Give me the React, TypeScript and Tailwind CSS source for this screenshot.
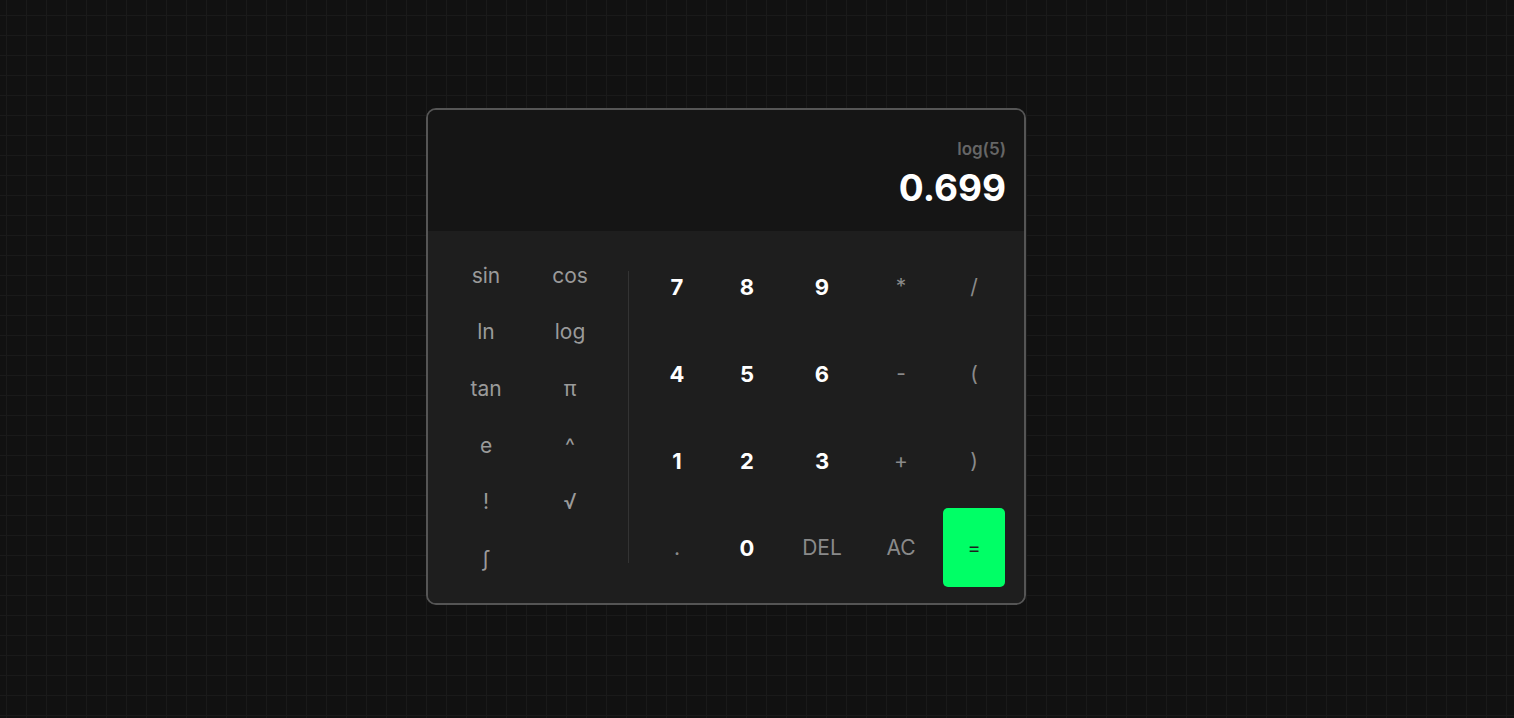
import React from "react";

const sciKeys = ["sin", "cos", "ln", "log", "tan", "π", "e", "^", "!", "√", "∫", ""];

type Key = { label: string; kind: "num" | "op" | "eq" };

const mainKeys: Key[] = [
  { label: "7", kind: "num" },
  { label: "8", kind: "num" },
  { label: "9", kind: "num" },
  { label: "*", kind: "op" },
  { label: "/", kind: "op" },
  { label: "4", kind: "num" },
  { label: "5", kind: "num" },
  { label: "6", kind: "num" },
  { label: "-", kind: "op" },
  { label: "(", kind: "op" },
  { label: "1", kind: "num" },
  { label: "2", kind: "num" },
  { label: "3", kind: "num" },
  { label: "+", kind: "op" },
  { label: ")", kind: "op" },
  { label: ".", kind: "op" },
  { label: "0", kind: "num" },
  { label: "DEL", kind: "op" },
  { label: "AC", kind: "op" },
  { label: "=", kind: "eq" },
];

const keyStyle: Record<Key["kind"], string> = {
  num: "text-white font-bold text-[22px]",
  op: "text-[#8a8a8a] font-normal text-[21px]",
  eq: "bg-[#00ff66] text-[#1e1e1e] font-normal rounded-[5px] text-[20px]",
};

export default function App() {
  return (
    <div className="min-h-screen h-screen w-full bg-[#111111] bg-[linear-gradient(to_right,#1a1a1a_1px,transparent_1px),linear-gradient(to_bottom,#1a1a1a_1px,transparent_1px)] bg-[size:20px_20px] bg-[position:6px_15px] flex items-center justify-center pr-[62px] pb-[5px] font-['Inter',sans-serif]">
      <div className="w-[600px] border-2 border-[#555555] rounded-[10px] overflow-hidden bg-[#1e1e1e]">
        {/* Display */}
        <div className="h-[121px] bg-[#151515] flex flex-col justify-end items-end pl-4 pr-[18px] pb-[23px]">
          <div className="text-[17px] leading-6 font-semibold text-[#666666] mb-[7px]">log(5)</div>
          <div className="text-[37px] leading-10 font-bold text-white">0.699</div>
        </div>

        {/* Keypad */}
        <div className="flex pl-4 pr-[19px] py-4 gap-4 bg-[#1e1e1e]">
          <div className="w-[168px] grid grid-cols-2 grid-rows-6">
            {sciKeys.map((k, i) => (
              <button
                key={i}
                className="flex items-center justify-center text-[21px] text-[#9a9a9a] leading-none"
              >
                {k}
              </button>
            ))}
          </div>

          <div className="w-px bg-[#333333] my-6" />

          <div className="flex-1 grid grid-cols-[64fr_60fr_74fr_68fr_62fr] grid-rows-[repeat(4,79px)] gap-2">
            {mainKeys.map((k) => (
              <button
                key={k.label}
                className={`flex items-center justify-center leading-none ${keyStyle[k.kind]}`}
              >
                {k.label}
              </button>
            ))}
          </div>
        </div>
      </div>
    </div>
  );
}
